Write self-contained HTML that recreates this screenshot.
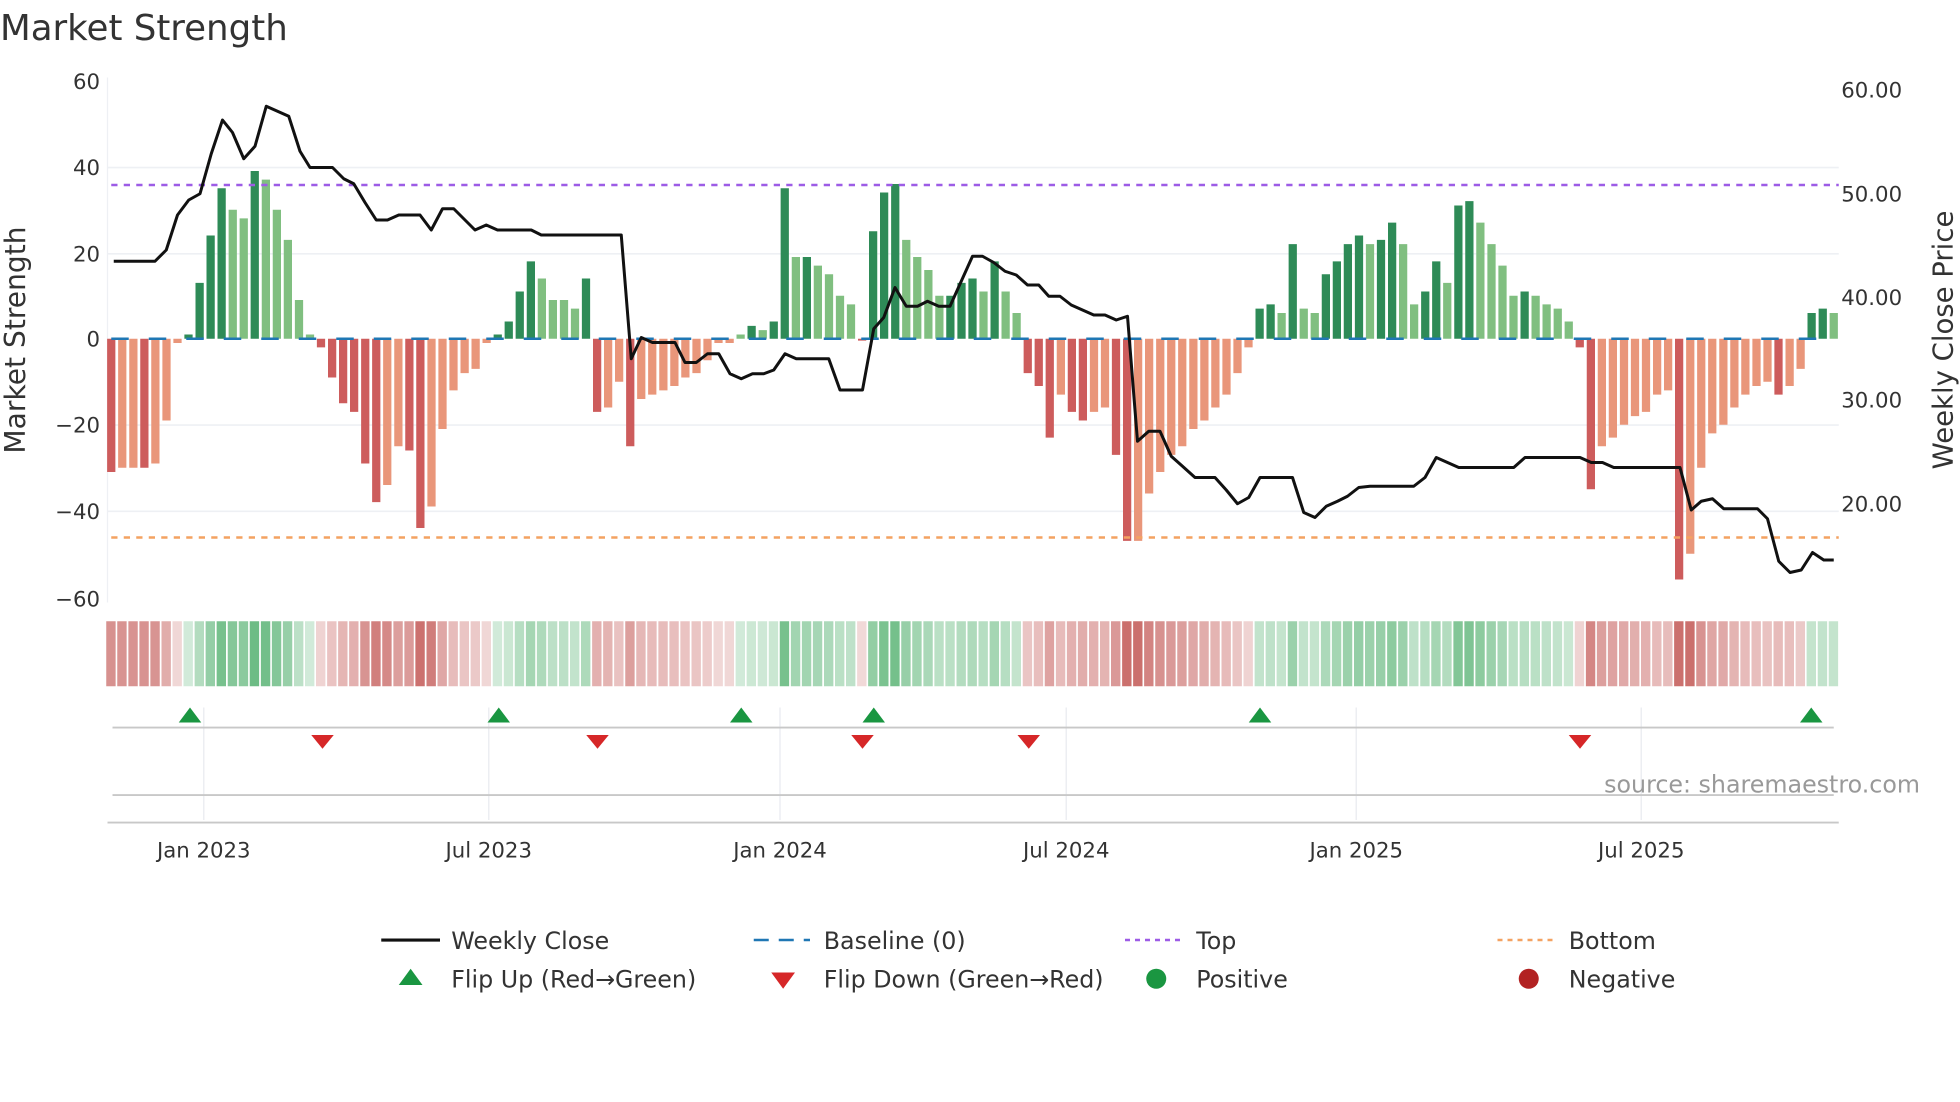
<!DOCTYPE html>
<html><head><meta charset="utf-8"><style>
html,body{margin:0;padding:0;background:#fff;}
svg{display:block;font-family:"DejaVu Sans","Liberation Sans",sans-serif;}
</style></head><body>
<svg id="s" width="1960" height="1102" viewBox="0 0 1568 881.6" xmlns="http://www.w3.org/2000/svg">
<rect width="1568" height="882" fill="#fff"/>
<text x="0" y="32" font-size="28.5" fill="#333">Market Strength</text>
<g stroke="#eef0f4" stroke-width="1.3">
<line x1="86" x2="1471" y1="134" y2="134"/><line x1="86" x2="1471" y1="203" y2="203"/>
<line x1="86" x2="1471" y1="340" y2="340"/><line x1="86" x2="1471" y1="409" y2="409"/>
</g>
<line x1="86" x2="86" y1="62" y2="482" stroke="#eef0f4"/>
<g id="bars"></g>
<line x1="89" x2="1467" y1="271" y2="271" stroke="#1f77b4" stroke-width="2" stroke-dasharray="14,16"/>
<line x1="89" x2="1471" y1="148" y2="148" stroke="#9d5ce6" stroke-width="2" stroke-dasharray="5,5"/>
<line x1="89" x2="1471" y1="430" y2="430" stroke="#f4a261" stroke-width="2" stroke-dasharray="5,5"/>
<polyline fill="none" stroke="#111" stroke-width="2.4" stroke-linejoin="round" points="91,209 124,209 133,200 142,172 151,160 160,155 169,123 178,96 186,106 195,127 204,117 213,85 222,89 231,93 240,121 248,134 266,134 275,143 283,147 292,162 301,176 310,176 319,172 336,172 345,184 354,167 363,167 380,184 389,180 398,184 425,184 433,188 497,188 505,287 513,270 522,274 540,274 548,290 557,290 566,283 575,283 584,299 593,303 602,299 611,299 619,296 628,283 637,287 663,287 672,312 690,312 699,263 707,254 716,230 725,245 734,245 742,241 751,245 760,245 769,225 778,205 786,205 795,210 804,217 813,220 822,228 831,228 839,237 848,237 857,244 866,248 875,252 884,252 893,256 902,253 910,353 919,345 928,345 937,365 946,373 956,382 972,382 981,392 990,403 999,398 1008,382 1034,382 1043,410 1052,414 1061,405 1070,401 1078,397 1087,390 1096,389 1131,389 1140,382 1149,366 1158,370 1167,374 1211,374 1220,366 1264,366 1273,370 1282,370 1291,374 1344,374 1353,408 1361,401 1370,399 1379,407 1406,407 1414,415 1423,449 1432,458 1441,456 1450,442 1459,448 1467,448"/>
<g id="heat"></g>
<g font-size="17" fill="#333" text-anchor="end">
<text x="80" y="71">60</text><text x="80" y="140">40</text><text x="80" y="209">20</text><text x="80" y="277">0</text>
<text x="80" y="346">−20</text><text x="80" y="415">−40</text><text x="80" y="485">−60</text>
</g>
<g font-size="17" fill="#333">
<text x="1473" y="78">60.00</text><text x="1473" y="161">50.00</text><text x="1473" y="244">40.00</text>
<text x="1473" y="326">30.00</text><text x="1473" y="409">20.00</text>
</g>
<text transform="translate(20,272) rotate(-90)" font-size="22.5" fill="#333" text-anchor="middle">Market Strength</text>
<text transform="translate(1562,272) rotate(-90)" font-size="22" fill="#333" text-anchor="middle">Weekly Close Price</text>
<g stroke="#eceef2" stroke-width="1.2">
<line x1="163" x2="163" y1="566" y2="656"/><line x1="391" x2="391" y1="566" y2="656"/><line x1="624" x2="624" y1="566" y2="656"/>
<line x1="853" x2="853" y1="566" y2="656"/><line x1="1085" x2="1085" y1="566" y2="656"/><line x1="1313" x2="1313" y1="566" y2="656"/>
</g>
<line x1="90" x2="1467" y1="582" y2="582" stroke="#c8c8c8" stroke-width="1.5"/>
<line x1="90" x2="1467" y1="636" y2="636" stroke="#c8c8c8" stroke-width="1.5"/>
<line x1="86" x2="1471" y1="658" y2="658" stroke="#c8c8c8" stroke-width="1.5"/>
<g id="marks"></g>
<text x="1536" y="634" font-size="19" fill="#999" text-anchor="end">source: sharemaestro.com</text>
<g font-size="17" fill="#333" text-anchor="middle">
<text x="163" y="686">Jan 2023</text><text x="391" y="686">Jul 2023</text><text x="624" y="686">Jan 2024</text>
<text x="853" y="686">Jul 2024</text><text x="1085" y="686">Jan 2025</text><text x="1313" y="686">Jul 2025</text>
</g>
<g font-size="19" fill="#333">
<line x1="305" x2="352" y1="752" y2="752" stroke="#111" stroke-width="2.5"/><text x="361" y="759">Weekly Close</text>
<line x1="603" x2="648" y1="752" y2="752" stroke="#1f77b4" stroke-width="2" stroke-dasharray="12,8"/><text x="659" y="759">Baseline (0)</text>
<line x1="900" x2="945" y1="752" y2="752" stroke="#9d5ce6" stroke-width="2" stroke-dasharray="4,4"/><text x="957" y="759">Top</text>
<line x1="1198" x2="1243" y1="752" y2="752" stroke="#f4a261" stroke-width="2" stroke-dasharray="4,4"/><text x="1255" y="759">Bottom</text>
<polygon points="319,788 338,788 328.5,775" fill="#1a9641"/><text x="361" y="790">Flip Up (Red→Green)</text>
<polygon points="617,778 636,778 626.5,791" fill="#d62728"/><text x="659" y="790">Flip Down (Green→Red)</text>
<circle cx="925" cy="783" r="8" fill="#1a9641"/><text x="957" y="790">Positive</text>
<circle cx="1223" cy="783" r="8" fill="#b22222"/><text x="1255" y="790">Negative</text>
</g>
</svg>
<script>
var d=[[-31,1],[-30,0],[-30,0],[-30,1],[-29,0],[-19,0],[-1,0],[1,1],[13,1],[24,1],[35,1],[30,0],[28,0],[39,1],[37,0],[30,0],[23,0],[9,0],[1,0],
[-2,1],[-9,1],[-15,1],[-17,1],[-29,1],[-38,1],[-34,0],[-25,0],[-26,1],[-44,1],[-39,0],[-21,0],[-12,0],[-8,0],[-7,0],[-1,0],
[1,1],[4,1],[11,1],[18,1],[14,0],[9,0],[9,0],[7,0],[14,1],
[-17,1],[-16,0],[-10,0],[-25,1],[-14,0],[-13,0],[-12,0],[-11,0],[-9,0],[-8,0],[-5,0],[-1,0],[-1,0],
[1,0],[3,1],[2,0],[4,1],[35,1],[19,0],[19,1],[17,0],[15,0],[10,0],[8,0],
[-0.3,1],
[25,1],[34,1],[36,1],[23,0],[19,0],[16,0],[10,0],[10,1],[13,1],[14,1],[11,0],[18,1],[11,0],[6,0],
[-8,1],[-11,1],[-23,1],[-13,0],[-17,1],[-19,1],[-17,0],[-16,0],[-27,1],[-47,1],[-47,0],[-36,0],[-31,0],[-27,0],[-25,0],[-21,0],[-19,0],[-16,0],[-13,0],[-8,0],[-2,0],
[7,1],[8,1],[6,0],[22,1],[7,0],[6,0],[15,1],[18,1],[22,1],[24,1],[22,0],[23,1],[27,1],[22,0],[8,0],[11,1],[18,1],[13,0],[31,1],[32,1],[27,0],[22,0],[17,0],[10,0],[11,1],[10,0],[8,0],[7,0],[4,0],
[-2,1],[-35,1],[-25,0],[-23,0],[-20,0],[-18,0],[-17,0],[-13,0],[-12,0],[-56,1],[-50,0],[-30,0],[-22,0],[-20,0],[-16,0],[-13,0],[-11,0],[-10,0],[-13,1],[-11,0],[-7,0],
[6,1],[7,1],[6,0]];
var n=d.length,sp=(1467-89)/(n-1),b='',h='';
for(var i=0;i<n;i++){var v=d[i][0],k=d[i][1],x=89+i*sp,y0=271,yy=271-v*3.44;
var c=v>0?(k?'#2e8b57':'#80bf80'):(k?'#cd5c5c':'#e9967a');
b+='<rect x="'+(x-3.3).toFixed(1)+'" y="'+Math.min(y0,yy).toFixed(1)+'" width="6.6" height="'+Math.max(1.5,Math.abs(yy-y0)).toFixed(1)+'" fill="'+c+'"/>';
var a=0.22+Math.min(1,Math.abs(v)/45)*0.6;
h+='<rect x="'+(x-4).toFixed(1)+'" y="497" width="'+(sp-1.3).toFixed(1)+'" height="52" fill="'+(v>0?'#3aa55a':'#c0504d')+'" fill-opacity="'+a.toFixed(2)+'"/>';}
document.getElementById('bars').innerHTML=b;document.getElementById('heat').innerHTML=h;
var m='';[152,399,593,699,1008,1449].forEach(function(x){m+='<polygon points="'+(x-9)+',578 '+(x+9)+',578 '+x+',566" fill="#1a9641"/>';});
[258,478,690,823,1264].forEach(function(x){m+='<polygon points="'+(x-9)+',588 '+(x+9)+',588 '+x+',599" fill="#d62728"/>';});
document.getElementById('marks').innerHTML=m;
</script>
</body></html>
